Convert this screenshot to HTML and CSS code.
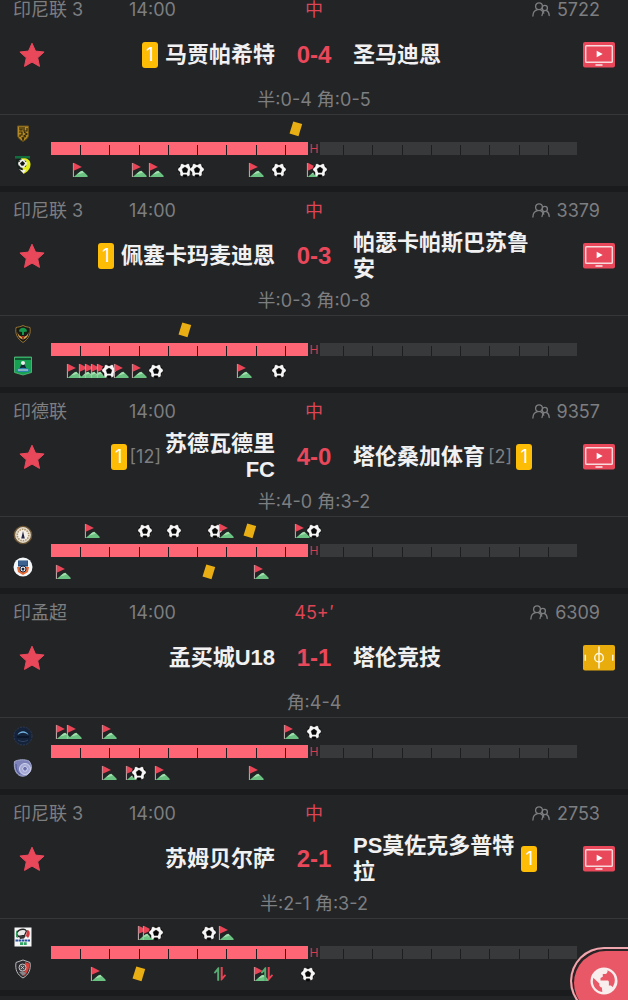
FILE: index.html
```html
<!DOCTYPE html>
<html lang="zh-CN">
<head>
<meta charset="utf-8">
<meta name="viewport" content="width=device-width, initial-scale=1">
<title>比分</title>
<link rel="stylesheet" href="styles.css">
</head>
<body>
<svg class="sprite" aria-hidden="true">
  <symbol id="star" viewBox="0 0 26 26"><path d="M13 1.200l3.500 7.900 8.600.9-6.400 5.800 1.800 8.600L13 20.100l-7.500 4.300 1.800-8.600L.9 10l8.600-.9z" fill="#e9485b" stroke="#e9485b" stroke-linejoin="round"/></symbol>
  <symbol id="people" viewBox="0 0 18 15"><g fill="none" stroke="#7d7e80" stroke-width="1.300" stroke-linecap="round"><circle cx="7" cy="4.200" r="3.400"/><path d="M.9 14C1 10 3 8.200 5.600 7.700M8.700 7.800c1.600.6 2.700 1.800 3.100 3.400"/><circle cx="12.800" cy="6" r="2.600"/><path d="M10 13.500c.2-2 .9-3.700 2-4.700M14.600 8.600c1.600.8 2.500 2.500 2.600 4.900"/></g></symbol>
  <symbol id="tv" viewBox="0 0 32 26"><rect width="32" height="25.500" rx="2" fill="#e9485b"/><rect x="2.700" y="3.700" width="26.600" height="16.600" rx=".8" fill="none" stroke="#f8d9dc" stroke-width="1.400"/><path d="M13.700 8.800l6 3.200-6 3.200z" fill="#fff"/><path d="M12.500 23h7" stroke="#fbe6e8" stroke-width="1.500"/></symbol>
  <symbol id="pitch" viewBox="0 0 32 26"><rect width="32" height="25.500" rx="2" fill="#e8ac0c"/><g fill="none" stroke="#fff6dc" stroke-width="1.500"><circle cx="16" cy="12.800" r="4.300"/><path d="M16 1.500v22M2.300 9.800v6M29.800 9.800v6"/></g></symbol>
  <symbol id="flag" viewBox="0 0 16 16"><path d="M1.700 15l2.600-2.200L7.800 9.700l2.300-1 2.600 2.100 2.900 3V15z" fill="#6cc283"/><path d="M5 12.500l3.200-2.800 2-1 1.700 1.700-3.700 1.400z" fill="#a3dfae"/><path d="M1.400 1v14" stroke="#c9b6b6" stroke-width="1"/><path d="M1.700.8L9.900 4.900 1.700 8.800z" fill="#e94557"/></symbol>
  <symbol id="ball" viewBox="0 0 16 16"><circle cx="8" cy="8" r="7" fill="#f6f6f6"/><path d="M8 5l2.800 2.100-1 3.300H6.200l-1-3.300zM5.200 1.600L8 2.900l2.800-1.300L8 1zM1.300 6.100L3 4.800l.5-2.200-1.800 2zM1 8.600l1.900 1.500.1 2.700C1.800 11.700 1.100 10.300 1 8.600zM15 8.600l-1.900 1.500-.1 2.700c1.200-1.100 1.900-2.500 2-4.200zM14.700 6.100L13 4.800l-.5-2.200 1.800 2zM5.500 14.500l.9-1.700h3.200l.9 1.700c-1.600.7-3.400.7-5 0z" fill="#080808" stroke="#080808" stroke-width=".5"/></symbol>
  <symbol id="card" viewBox="0 0 16 16"><path d="M5.300.5l8.900 2.600-3.700 12.200L1.500 12.600z" fill="#e8ae13"/></symbol>
  <symbol id="sub" viewBox="0 0 16 16"><path d="M7.200 14.800V1.300H6L1.800 6.500 3 7.700l2.200-2.300v9.400z" fill="#56ab70"/><path d="M8.700 1v13.500h1.100l4.300-5-1.200-1.200-2.200 2.200V1z" fill="#e64354"/></symbol>
</svg>

<main class="matches">

  <article class="match">
    <header class="match-head">
      <div class="origin"><span class="league">印尼联 3</span><time>14:00</time></div>
      <span class="status">中</span>
      <span class="viewers"><svg class="people"><use href="#people"/></svg>5722</span>
    </header>
    <div class="teams">
      <button class="star" aria-label="收藏"><svg><use href="#star"/></svg></button>
      <div class="team home"><span class="booked">1</span><span class="rank"></span><span class="name">马贾帕希特</span></div>
      <strong class="score">0-4</strong>
      <div class="team"><span class="name">圣马迪恩</span></div>
      <button class="live" aria-label="直播"><svg><use href="#tv"/></svg></button>
    </div>
    <p class="stats">半:0-4 角:0-5</p>
    <div class="timeline">
      <div class="crests">
        <svg viewBox="0 0 20 20"><path d="M4.500 3h11v9c0 3-3 5-5.500 6.500C7.500 17 4.500 15 4.500 12z" fill="#b58a25" stroke="#6e5419"/><path d="M7 4v3h2V4M11 4v4h3V5M6 9h3v3H7v2M11 9l3 2-3 2 2 1M9 14l1 3 1-3" fill="none" stroke="#31270c" stroke-width="1.200"/></svg>
        <svg viewBox="0 0 20 20"><path d="M2 1h15v2.500H2z" fill="#126d3e"/><path d="M8 3.500c4-1 9.500 0 9.500 6 0 5-4 8-7 9.500z" fill="#e3ec16"/><path d="M3.500 4H9v13C5 15 2 9 3.500 4z" fill="#17201c"/><circle cx="9.500" cy="8.500" r="4.300" fill="#f0f0ea"/><path d="M9.500 6.500l2 1.500-1 2.200H8.400L7.500 8zM6 7l1-1.500M12 12l1-1.500M7 12l-1-1.500M12 5.500l1 1.500" fill="#111" stroke="#111" stroke-width=".8"/><path d="M6 14c2 1.500 5 1.500 7.500 0l-3 4.500z" fill="#f4f4ed"/></svg>
      </div>
      <div class="track">
        <div class="lane">
          <svg style="--minute:42"><use href="#card"/></svg>
        </div>
        <div class="bar"><span class="half">H</span></div>
        <div class="lane lower">
          <svg style="--minute:5"><use href="#flag"/></svg>
          <svg style="--minute:15"><use href="#flag"/></svg>
          <svg style="--minute:18"><use href="#flag"/></svg>
          <svg style="--minute:23"><use href="#ball"/></svg>
          <svg style="--minute:25"><use href="#ball"/></svg>
          <svg style="--minute:35"><use href="#flag"/></svg>
          <svg style="--minute:39"><use href="#ball"/></svg>
          <svg style="--minute:45"><use href="#flag"/></svg>
          <svg style="--minute:46"><use href="#ball"/></svg>
        </div>
      </div>
    </div>
  </article>

  <article class="match">
    <header class="match-head">
      <div class="origin"><span class="league">印尼联 3</span><time>14:00</time></div>
      <span class="status">中</span>
      <span class="viewers"><svg class="people"><use href="#people"/></svg>3379</span>
    </header>
    <div class="teams">
      <button class="star" aria-label="收藏"><svg><use href="#star"/></svg></button>
      <div class="team home"><span class="booked">1</span><span class="rank"></span><span class="name">佩塞卡玛麦迪恩</span></div>
      <strong class="score">0-3</strong>
      <div class="team"><span class="name">帕瑟卡帕斯巴苏鲁<br>安</span></div>
      <button class="live" aria-label="直播"><svg><use href="#tv"/></svg></button>
    </div>
    <p class="stats">半:0-3 角:0-8</p>
    <div class="timeline">
      <div class="crests">
        <svg viewBox="0 0 20 20"><path d="M10 1.500c3 1.500 5 1.500 7 2 1 6-1 11-7 15C4 14.500 2 9.500 3 3.500c2-.5 4-.5 7-2z" fill="#191a16" stroke="#a27b35" stroke-width=".9"/><path d="M6 7.500c0-5 8-5 8 0l-3 .5v3H9V8z" fill="#15964a"/><path d="M4.500 8c1 3 2 4 4 4.500l1.500 3 1.500-3c2-.5 3-1.500 4-4.500 0 4-2 6.500-5.500 7.500C6.500 14.500 4.500 12 4.500 8z" fill="#d9a351"/><path d="M8.700 12h2.600L10 16z" fill="#b23126"/></svg>
        <svg viewBox="0 0 20 20"><path d="M1.500 1h17v15.500L10 19l-8.500-2.500z" fill="#15a052" stroke="#5abf7e" stroke-width=".8"/><path d="M2 3h16" stroke="#123b29" stroke-width="1.500"/><path d="M10 5l4 9H6z" fill="#122433"/><circle cx="10" cy="7" r="2" fill="#eee"/><path d="M3 14c4-3 10-3 14 0l-2 2H5z" fill="#2b83b0"/><path d="M5 14h10" stroke="#e9e5d1"/></svg>
      </div>
      <div class="track">
        <div class="lane">
          <svg style="--minute:23"><use href="#card"/></svg>
        </div>
        <div class="bar"><span class="half">H</span></div>
        <div class="lane lower">
          <svg style="--minute:4"><use href="#flag"/></svg>
          <svg style="--minute:6"><use href="#flag"/></svg>
          <svg style="--minute:7"><use href="#flag"/></svg>
          <svg style="--minute:8"><use href="#flag"/></svg>
          <svg style="--minute:9"><use href="#flag"/></svg>
          <svg style="--minute:10"><use href="#ball"/></svg>
          <svg style="--minute:12"><use href="#flag"/></svg>
          <svg style="--minute:15"><use href="#flag"/></svg>
          <svg style="--minute:18"><use href="#ball"/></svg>
          <svg style="--minute:33"><use href="#flag"/></svg>
          <svg style="--minute:39"><use href="#ball"/></svg>
        </div>
      </div>
    </div>
  </article>

  <article class="match">
    <header class="match-head">
      <div class="origin"><span class="league">印德联</span><time>14:00</time></div>
      <span class="status">中</span>
      <span class="viewers"><svg class="people"><use href="#people"/></svg>9357</span>
    </header>
    <div class="teams">
      <button class="star" aria-label="收藏"><svg><use href="#star"/></svg></button>
      <div class="team home"><span class="booked">1</span><span class="rank">[12]</span><span class="name">苏德瓦德里<br>FC</span></div>
      <strong class="score">4-0</strong>
      <div class="team"><span class="name">塔伦桑加体育</span><span class="rank">[2]</span><span class="booked">1</span></div>
      <button class="live" aria-label="直播"><svg><use href="#tv"/></svg></button>
    </div>
    <p class="stats">半:4-0 角:3-2</p>
    <div class="timeline">
      <div class="crests">
        <svg viewBox="0 0 20 20"><circle cx="10" cy="10" r="8.600" fill="#e2d9c8" stroke="#6b5535" stroke-width="1.400"/><circle cx="10" cy="10" r="5.700" fill="#f5f0e7" stroke="#ad9670" stroke-width="1.500" stroke-dasharray="1.500 1"/><path d="M10 6l.8 3.500 1 4H8.200l1-4z" fill="#232343"/></svg>
        <svg viewBox="0 0 20 20"><circle cx="10" cy="10" r="9.500" fill="#f4f7f9"/><path d="M5 3.500h10v6H5z" fill="#234c7c"/><path d="M5.500 5h9M5.500 7h9" stroke="#6f91b5" stroke-width=".7"/><path d="M4 10h12l-1 5-5 3-5-3z" fill="#e56a34"/><circle cx="10" cy="12" r="3" fill="#eef1f3" stroke="#1d2c46"/><path d="M10 10.500l1.500 1.100-.6 1.800H9.100l-.6-1.800z" fill="#17243d"/></svg>
      </div>
      <div class="track">
        <div class="lane">
          <svg style="--minute:7"><use href="#flag"/></svg>
          <svg style="--minute:16"><use href="#ball"/></svg>
          <svg style="--minute:21"><use href="#ball"/></svg>
          <svg style="--minute:28"><use href="#ball"/></svg>
          <svg style="--minute:30"><use href="#flag"/></svg>
          <svg style="--minute:34"><use href="#card"/></svg>
          <svg style="--minute:43"><use href="#flag"/></svg>
          <svg style="--minute:45"><use href="#ball"/></svg>
        </div>
        <div class="bar"><span class="half">H</span></div>
        <div class="lane lower">
          <svg style="--minute:2"><use href="#flag"/></svg>
          <svg style="--minute:27"><use href="#card"/></svg>
          <svg style="--minute:36"><use href="#flag"/></svg>
        </div>
      </div>
    </div>
  </article>

  <article class="match">
    <header class="match-head">
      <div class="origin"><span class="league">印孟超</span><time>14:00</time></div>
      <span class="status">45+<span class="prime">′</span></span>
      <span class="viewers"><svg class="people"><use href="#people"/></svg>6309</span>
    </header>
    <div class="teams">
      <button class="star" aria-label="收藏"><svg><use href="#star"/></svg></button>
      <div class="team home"><span class="name">孟买城U18</span></div>
      <strong class="score">1-1</strong>
      <div class="team"><span class="name">塔伦竞技</span></div>
      <button class="live" aria-label="动画直播"><svg><use href="#pitch"/></svg></button>
    </div>
    <p class="stats">角:4-4</p>
    <div class="timeline">
      <div class="crests">
        <svg viewBox="0 0 20 20"><circle cx="10" cy="10" r="9" fill="#15233a" stroke="#2b3b58" stroke-width="1" stroke-dasharray="2 1"/><path d="M4.500 9c2-5 9-5 11 0-4-3-7-3-11 0z" fill="#6fb3df"/><path d="M4 10h12v2H4z" fill="#0c1729"/><path d="M5 14c3 2 7 2 10 0" fill="none" stroke="#314562"/></svg>
        <svg viewBox="0 0 20 20"><path d="M1.500 3.500C5 1.500 12 1 16 3c4 5 3 10-2 14-7 4-14-2-12.500-13.500z" fill="#7d83b9" stroke="#b9bce0" stroke-width=".8"/><circle cx="12" cy="11" r="5.500" fill="#a4a9d5" stroke="#d8daef" stroke-width=".9"/><path d="M12 8l2.500 2-1 3h-3l-1-3z" fill="#6d73ad" stroke="#e0e1f3" stroke-width=".8"/><path d="M3 6c0 5 1 8 4 10" fill="none" stroke="#4e5596"/></svg>
      </div>
      <div class="track">
        <div class="lane">
          <svg style="--minute:2"><use href="#flag"/></svg>
          <svg style="--minute:4"><use href="#flag"/></svg>
          <svg style="--minute:10"><use href="#flag"/></svg>
          <svg style="--minute:41"><use href="#flag"/></svg>
          <svg style="--minute:45"><use href="#ball"/></svg>
        </div>
        <div class="bar"><span class="half">H</span></div>
        <div class="lane lower">
          <svg style="--minute:10"><use href="#flag"/></svg>
          <svg style="--minute:14"><use href="#flag"/></svg>
          <svg style="--minute:15"><use href="#ball"/></svg>
          <svg style="--minute:19"><use href="#flag"/></svg>
          <svg style="--minute:35"><use href="#flag"/></svg>
        </div>
      </div>
    </div>
  </article>

  <article class="match">
    <header class="match-head">
      <div class="origin"><span class="league">印尼联 3</span><time>14:00</time></div>
      <span class="status">中</span>
      <span class="viewers"><svg class="people"><use href="#people"/></svg>2753</span>
    </header>
    <div class="teams">
      <button class="star" aria-label="收藏"><svg><use href="#star"/></svg></button>
      <div class="team home"><span class="name">苏姆贝尔萨</span></div>
      <strong class="score">2-1</strong>
      <div class="team"><span class="name">PS莫佐克多普特<br>拉</span><span class="rank"></span><span class="booked">1</span></div>
      <button class="live" aria-label="直播"><svg><use href="#tv"/></svg></button>
    </div>
    <p class="stats">半:2-1 角:3-2</p>
    <div class="timeline">
      <div class="crests">
        <svg viewBox="0 0 20 20"><path d="M1.500.5h17v19h-17z" fill="#f6f6f6"/><path d="M3.500 7c1-5 8-6 10-3l-2 4.500-6 1z" fill="#e9e9e9" stroke="#252525" stroke-width="1.300"/><path d="M14 3c3.500 0 3.500 5 1 8l-2-2z" fill="#d3393f"/><path d="M4 3L3 5v5l2 1z" fill="#2f9a58"/><path d="M6 9.500l7-1-2 3-4 .5z" fill="#333"/><path d="M2.500 13.500h15" stroke="#294f9d" stroke-width="2.200" stroke-dasharray="2.500 .5"/><path d="M7 16.700h7" stroke="#30a263" stroke-width="2.800" stroke-dasharray="3 .7"/></svg>
        <svg viewBox="0 0 20 20"><path d="M10 1l7 2.500c1 7-1 12-7 15.500C4 15.500 2 10.500 3 3.500z" fill="#2a2a2e" stroke="#b8b8bb" stroke-width="1"/><path d="M12 3l4 1.500c.5 5-1 9-5 12.500z" fill="#d9403a"/><circle cx="9.500" cy="8.500" r="3.500" fill="#46464b" stroke="#d2d2d4" stroke-width=".9"/><path d="M6 13l4-1 3 2-3 3z" fill="#8a8588"/><path d="M8 7l3 3M11 7L8 10" stroke="#ddd" stroke-width=".7"/></svg>
      </div>
      <div class="track">
        <div class="lane">
          <svg style="--minute:16"><use href="#flag"/></svg>
          <svg style="--minute:17"><use href="#flag"/></svg>
          <svg style="--minute:18"><use href="#ball"/></svg>
          <svg style="--minute:27"><use href="#ball"/></svg>
          <svg style="--minute:30"><use href="#flag"/></svg>
        </div>
        <div class="bar"><span class="half">H</span></div>
        <div class="lane lower">
          <svg style="--minute:8"><use href="#flag"/></svg>
          <svg style="--minute:15"><use href="#card"/></svg>
          <svg style="--minute:29"><use href="#sub"/></svg>
          <svg style="--minute:36"><use href="#flag"/></svg>
          <svg style="--minute:37"><use href="#sub"/></svg>
          <svg style="--minute:44"><use href="#ball"/></svg>
        </div>
      </div>
    </div>
  </article>
</main>

<button class="globe" aria-label="地区">
  <svg viewBox="0 0 28 28"><circle cx="14" cy="14" r="13.500" fill="#f8eeee"/><path d="M3.300 10.800l6 5.700v1.300c0 1.500 1 2.500 2.600 2.700l.4 4.500C6.500 24 3 19.500 2.800 14.500zM17.500 3.200c.3 2-.6 3.600-2.400 3.800h-2.300v2.700L10.500 11v2.400h6.800c1 0 1.600.7 1.600 1.700v3.500h1.300c1 0 1.700.6 2.200 1.600 4.300-5.500 3.100-13.800-4.900-17z" fill="#e95866"/></svg>
</button>
</body>
</html>
```
FILE: styles.css
```css
* { box-sizing: border-box; }

body {
  margin: 0;
  height: 100vh;
  overflow: hidden;
  background: #232426;
  color: #7d7e80;
  font: 18px/24px Inter, "Noto Sans CJK SC", sans-serif;
}

button {
  padding: 0;
  border: 0;
  background: none;
  cursor: pointer;
}

svg { display: block; }

.sprite {
  position: absolute;
  width: 0;
  height: 0;
}

/* The list is scrolled slightly past the top of the first card. */
.matches { margin-top: -9px; }

.match { border-bottom: 6px solid #1a1b1d; }

.match-head {
  display: grid;
  grid-template-columns: 1fr auto 1fr;
  align-items: center;
  height: 37px;
}

.origin {
  display: flex;
  padding-left: 13px;
}

.league { width: 116px; }

.status { color: #dd4555; }

.prime { padding-left: 1px; }

.viewers {
  display: flex;
  align-items: center;
  justify-content: flex-end;
  gap: 7px;
  padding-right: 28px;
}

.people {
  width: 18px;
  height: 15px;
}

.teams {
  display: grid;
  grid-template-columns: 64px 1fr 78px 1fr 64px;
  align-items: center;
  height: 54px;
}

.star { justify-self: center; }

.star svg {
  width: 26px;
  height: 26px;
}

.live {
  justify-self: end;
  margin-right: 13px;
}

.live svg {
  width: 32px;
  height: 26px;
}

.team {
  display: flex;
  align-items: center;
  white-space: nowrap;
}

.home {
  justify-content: flex-end;
  text-align: right;
}

.name {
  color: #f1f1f2;
  font: bold 22px/26px "Liberation Sans", "Noto Sans CJK SC", sans-serif;
}

.rank { margin: 0 4px 0 3px; }

.booked {
  width: 16px;
  border-radius: 3px;
  background: #fdbc05;
  color: #fff;
  line-height: 26px;
  text-align: center;
}

.score {
  color: #e9485b;
  font: bold 24px/26px "Liberation Sans", sans-serif;
  text-align: center;
}

.stats {
  margin: 0;
  padding: 6px 0 2px;
  border-bottom: 1px solid #36373a;
  text-align: center;
}

.timeline {
  display: grid;
  grid-template-columns: 51px 1fr 51px;
  height: 71px;
}

.crests {
  display: grid;
  align-content: start;
  gap: 12px;
  padding: 8px 0 0 13px;
}

.crests svg {
  width: 20px;
  height: 20px;
}

.track { padding-top: 6px; }

.lane {
  position: relative;
  height: 16px;
  margin-bottom: 5px;
}

.lower { margin: 7px 0 0; }

/* Events sit along the track by the minute in which they happened. */
.lane svg {
  position: absolute;
  left: calc(var(--minute) * 100% / 90);
  width: 16px;
  height: 16px;
  margin-left: -8px;
}

.bar {
  display: grid;
  justify-content: center;
  height: 13px;
  background:
    repeating-linear-gradient(90deg, transparent 0 calc(100% / 18 - 1px), #1d1e20 calc(100% / 18 - 1px) calc(100% / 18)) 1px 100% / 100% 10px no-repeat,
    linear-gradient(90deg, #ff6675 50%, #38393b 50%);
}

.half {
  width: 12px;
  background: #232426;
  color: #d63c4e;
  font-size: 12px;
  line-height: 13px;
  text-align: center;
}

.globe {
  position: fixed;
  right: 0;
  bottom: -15px;
  display: flex;
  align-items: center;
  width: 58px;
  height: 68px;
  padding-left: 18px;
  border: 2px solid #f0a6ae;
  border-right: 0;
  border-radius: 34px 0 0 34px;
  background: #e95866;
  box-shadow: inset 2px 2px 0 #2b2427;
}

.globe svg {
  width: 28px;
  height: 28px;
}
```
